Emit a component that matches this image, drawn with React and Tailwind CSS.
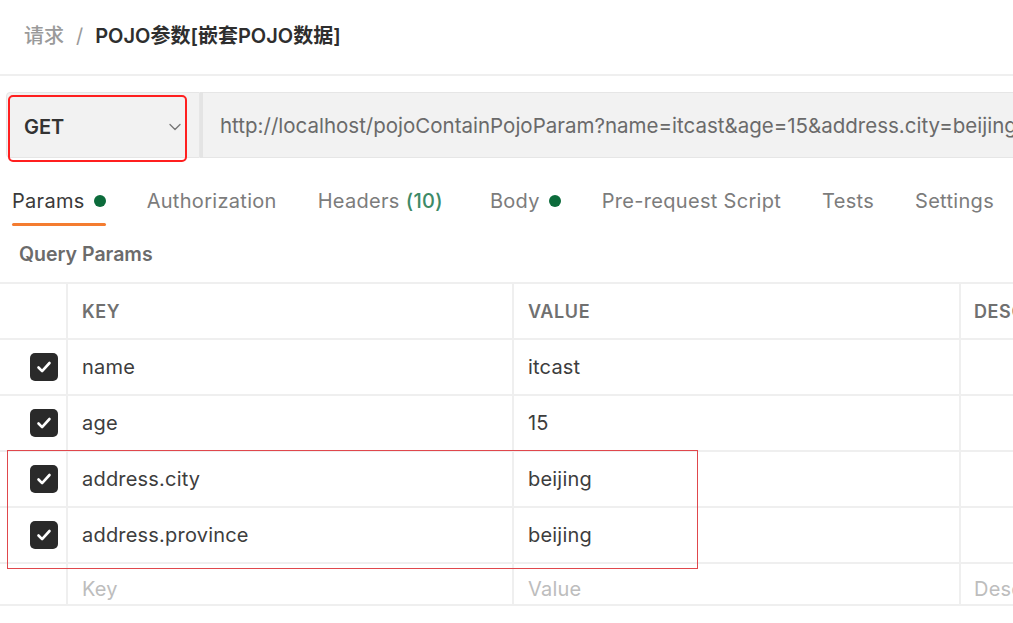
import { ChevronDown } from "lucide-react";

const TABS = [
  { label: "Params", dot: true, active: true },
  { label: "Authorization" },
  { label: "Headers", count: "(10)" },
  { label: "Body", dot: true },
  { label: "Pre-request Script" },
  { label: "Tests" },
  { label: "Settings" },
];

const ROWS = [
  { key: "name", value: "itcast" },
  { key: "age", value: "15" },
  { key: "address.city", value: "beijing" },
  { key: "address.province", value: "beijing" },
];

function CheckBox() {
  return (
    <div className="w-[28px] h-[28px] rounded-[5px] bg-[#2a2a2a] flex items-center justify-center">
      <svg width="18" height="18" viewBox="0 0 18 18" fill="none">
        <path d="M3.5 9.5l3.6 3.6L14.5 5" stroke="#fff" strokeWidth="2.6" strokeLinecap="round" strokeLinejoin="round" />
      </svg>
    </div>
  );
}

// 一行：勾选列 / KEY / VALUE / DESCRIPTION
function Row({ check, k, v, d, placeholder, header }) {
  const txt = header
    ? "text-[18px] font-semibold text-[#707070] tracking-[0.6px]"
    : placeholder
    ? "text-[20px] tracking-[0.2px] text-[#bdbdbd] pt-[10px]"
    : "text-[20px] tracking-[0.2px] text-[#3d3d3d]";
  return (
    <div className={`flex border-b-2 border-[#efefef] ${placeholder ? "h-[42px]" : "h-[56px]"}`}>
      <div className="w-[68px] border-r-2 border-[#efefef] flex items-center justify-end pr-[8px] shrink-0">
        {check && <CheckBox />}
      </div>
      <div className={`w-[446px] border-r-2 border-[#efefef] flex items-center pl-[14px] shrink-0 ${txt}`}>{k}</div>
      <div className={`w-[447px] border-r-2 border-[#efefef] flex items-center pl-[14px] shrink-0 ${txt}`}>{v}</div>
      <div className={`flex-1 min-w-0 flex items-center pl-[13px] whitespace-nowrap overflow-hidden ${txt}`}>{d}</div>
    </div>
  );
}

export default function App() {
  return (
    <div className="w-[1013px] h-[623px] bg-white overflow-hidden font-['Inter','Noto_Sans_CJK_SC',sans-serif]">
      {/* 面包屑 */}
      <div className="h-[76px] border-b-2 border-[#efefef] flex items-center pl-[24px] pb-[3px] text-[20px]">
        <span className="text-[#9a9a9a] font-medium">请求</span>
        <span className="text-[#9a9a9a] mx-[12px]">/</span>
        <span className="text-[#2e2e2e] font-semibold">POJO参数[嵌套POJO数据]</span>
      </div>

      {/* 请求栏 */}
      <div className="relative mt-[16px] ml-[6px] flex h-[66px]">
        <div className="w-[194px] bg-[#f2f2f2] border border-[#e6e6e6] rounded-l-[4px] flex items-center justify-between pl-[17px] pr-[14px] pt-[3px]">
          <span className="text-[20px] font-semibold text-[#333]">GET</span>
          <ChevronDown size={20} strokeWidth={1.6} className="text-[#777]" />
        </div>
        <div className="w-[3px] bg-[#e4e4e4]" />
        <div className="flex-1 min-w-0 bg-[#f2f2f2] border-y border-[#e6e6e6] flex items-center pl-[17px] pt-[3px] overflow-hidden">
          <span className="text-[20.5px] text-[#6a6a6a] whitespace-nowrap">
            http://localhost/pojoContainPojoParam?name=itcast&amp;age=15&amp;address.city=beijing&amp;address.province=beijing
          </span>
        </div>
        <div className="absolute left-[2px] top-[3px] w-[179px] h-[67px] border-2 border-[#ff1f1f] rounded-[5px]" />
      </div>

      {/* 标签 */}
      <div className="flex items-end gap-[41px] pl-[12px] mt-[24px] h-[44px]">
        {TABS.map((t) => (
          <div
            key={t.label}
            className={`relative flex items-center h-[44px] pb-[7px] text-[20px] tracking-[0.3px] whitespace-nowrap ${t.label === "Body" ? "ml-[6px]" : ""}`}
          >
            <span className={t.active ? "text-[#3a3a3a]" : "text-[#7c7c7c]"}>{t.label}</span>
            {t.count && <span className="ml-[6px] text-[#3d8a67] font-medium">{t.count}</span>}
            {t.dot && <span className="ml-[9px] w-[12px] h-[12px] rounded-full bg-[#0c6b3b]" />}
            {t.active && <span className="absolute left-0 right-0 bottom-[0px] h-[3px] bg-[#f47c30] rounded-full" />}
          </div>
        ))}
      </div>

      <div className="h-[56px] flex items-center pl-[19px] pt-[1px] text-[19.5px] font-semibold text-[#6b6b6b]">Query Params</div>

      {/* 参数表 */}
      <div className="relative border-t-2 border-[#efefef]">
        <Row header k="KEY" v="VALUE" d="DESCRIPTION" />
        {ROWS.map((r) => (
          <Row key={r.key} check k={r.key} v={r.value} />
        ))}
        <Row placeholder k="Key" v="Value" d="Description" />
        <div className="absolute left-[7px] top-[166px] w-[691px] h-[119px] border border-[#e0474c]" />
      </div>
    </div>
  );
}
